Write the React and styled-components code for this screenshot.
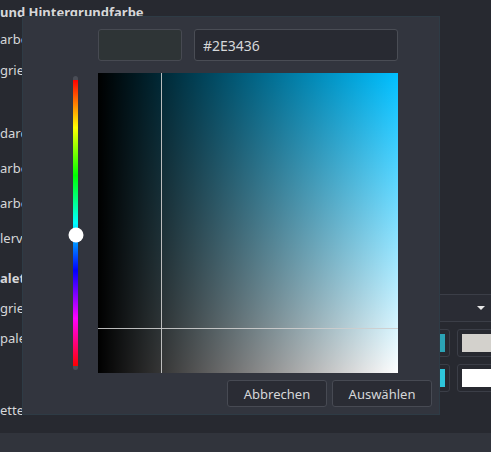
import React from "react";
import styled, { createGlobalStyle } from "styled-components";

const GlobalStyle = createGlobalStyle`
  html, body { margin: 0; padding: 0; background: #272930; }
  body { font-family: "Noto Sans", "Open Sans", sans-serif; }
  * { box-sizing: border-box; }
`;

const Page = styled.div`
  width: 100%;
  height: 100vh;
  display: flex;
  flex-direction: column;
  overflow: hidden;
`;

const Main = styled.div`
  flex: 1;
  position: relative;
  overflow: hidden;
  background: #272930;
`;

const BottomBar = styled.div`
  height: 19px;
  flex-shrink: 0;
  background: #31343c;
`;

const Form = styled.div`
  display: flex;
  flex-direction: column;
  width: 520px;
`;

const Row = styled.div`
  display: flex;
  align-items: ${(p) => (p.$top ? "flex-start" : "center")};
  height: ${(p) => (p.$h ? `${p.$h}px` : "auto")};
  margin-top: ${(p) => p.$mt || 0}px;
`;

const Label = styled.div`
  width: 205px;
  flex-shrink: 0;
  font-size: 13px;
  line-height: 18px;
  color: #d6d7d9;
  font-weight: ${(p) => (p.$bold ? 700 : 400)};
  white-space: nowrap;
`;

const Control = styled.div`
  flex: 1;
`;

const Dropdown = styled.div`
  width: 293px;
  height: 28px;
  border: 1px solid #3b3e47;
  border-radius: 3px;
  background: #2a2c34;
  display: flex;
  align-items: center;
  justify-content: flex-end;
  padding-right: 12px;
`;

const SwatchGrid = styled.div`
  display: grid;
  grid-template-columns: repeat(5, 56px);
  grid-auto-rows: 28px;
  gap: 7px;
`;

const SwatchCell = styled.div`
  border: 1px solid #3b3e47;
  border-radius: 3px;
  padding: 4px;
  background: #272930;
`;

const SwatchFill = styled.div`
  height: 100%;
  background: ${(p) => p.$c};
`;

const Dialog = styled.div`
  position: absolute;
  left: 22px;
  top: 16px;
  width: 418px;
  height: 399px;
  border: 1px solid #2e3b45;
  background: #32353e;
  padding: 12px 7px 7px 0;
  display: flex;
  flex-direction: column;
`;

const Body = styled.div`
  display: grid;
  grid-template-columns: 75px 300px;
  grid-template-rows: 32px 300px;
  row-gap: 12px;
`;

const TopRow = styled.div`
  grid-column: 2;
  grid-row: 1;
  display: flex;
  gap: 12px;
`;

const CurrentSwatch = styled.div`
  width: 84px;
  height: 32px;
  border: 1px solid #474a52;
  border-radius: 3px;
  background: ${(p) => p.$c};
`;

const HexInput = styled.input`
  width: 204px;
  height: 32px;
  background: #282a32;
  border: 1px solid #4a4d55;
  border-radius: 3px;
  color: #d6d7d9;
  font-family: "Noto Sans", sans-serif;
  font-size: 14px;
  padding: 0 8px;
  outline: none;
`;

const HueColumn = styled.div`
  grid-column: 1;
  grid-row: 2;
  padding: 3px 0 3px 50px;
  display: flex;
`;

const HueTrack = styled.div`
  position: relative;
  width: 5px;
  height: 100%;
  background: #4a4d56;
  border-radius: 3px;
  padding: 4px 0;
  display: flex;
`;

const HueGradient = styled.div`
  flex: 1;
  background: linear-gradient(
    to bottom,
    #ff0000 0%,
    #ffff00 16.67%,
    #00ff00 33.33%,
    #00ffff 50%,
    #0000ff 66.67%,
    #ff00ff 83.33%,
    #ff0000 100%
  );
`;

const HueKnob = styled.div`
  position: absolute;
  left: 50%;
  width: 15px;
  height: 15px;
  border-radius: 50%;
  background: #ffffff;
  transform: translate(-50%, -50%);
`;

const ColorArea = styled.div`
  grid-column: 2;
  grid-row: 2;
  position: relative;
  overflow: hidden;
  background: linear-gradient(to right, #000000, rgba(0, 0, 0, 0)),
    linear-gradient(to bottom, ${(p) => p.$hue}, #ffffff);
`;

const VLine = styled.div`
  position: absolute;
  top: 0;
  bottom: 0;
  width: 1px;
  background: rgba(205, 205, 205, 0.9);
`;

const HLine = styled.div`
  position: absolute;
  left: 0;
  right: 0;
  height: 1px;
  background: rgba(205, 205, 205, 0.9);
`;

const Footer = styled.div`
  display: flex;
  justify-content: flex-end;
  gap: 5px;
  margin-top: 7px;
`;

const Button = styled.button`
  width: 100px;
  height: 27px;
  background: #2a2c34;
  border: 1px solid #474a53;
  border-radius: 3px;
  color: #d6d7d9;
  font-family: "Noto Sans", sans-serif;
  font-size: 13px;
  padding: 0;
`;

const swatches = [
  ["#3b4252", "#5e81ac", "#88c0d0", "#2ba3b5", "#d3d1cc"],
  ["#4c566a", "#81a1c1", "#8fbcbb", "#2ec6dc", "#ffffff"],
];

export default function App() {
  const hue = 195;
  const sat = 0.15;
  const val = 0.21;
  const trackLen = 294;
  const knobTop = 4 + (hue / 360) * (trackLen - 8);
  return (
    <>
      <GlobalStyle />
      <Page>
        <Main>
          <Form>
            <Row $h={18} $mt={3}>
              <Label $bold>und Hintergrundfarbe</Label>
            </Row>
            <Row $h={36}>
              <Label>arbe</Label>
            </Row>
            <Row $h={26}>
              <Label>grie</Label>
            </Row>
            <Row $h={34} $mt={33}>
              <Label>darc</Label>
            </Row>
            <Row $h={36}>
              <Label>arbe</Label>
            </Row>
            <Row $h={34}>
              <Label>arbe</Label>
            </Row>
            <Row $h={36}>
              <Label>lerv</Label>
            </Row>
            <Row $h={32} $mt={6}>
              <Label $bold>alet</Label>
            </Row>
            <Row $h={28}>
              <Label>grie</Label>
              <Control>
                <Dropdown>
                  <svg width="8" height="4" viewBox="0 0 8 4">
                    <polygon points="0,0 8,0 4,4" fill="#e8e8e8" />
                  </svg>
                </Dropdown>
              </Control>
            </Row>
            <Row $top $mt={7}>
              <Label>pale</Label>
              <Control>
                <SwatchGrid>
                  {swatches.flat().map((c, i) => (
                    <SwatchCell key={i}>
                      <SwatchFill $c={c} />
                    </SwatchCell>
                  ))}
                </SwatchGrid>
              </Control>
            </Row>
            <Row $h={18} $mt={9}>
              <Label>ette</Label>
            </Row>
          </Form>

          <Dialog>
            <Body>
              <TopRow>
                <CurrentSwatch $c="#2E3436" />
                <HexInput defaultValue="#2E3436" readOnly />
              </TopRow>
              <HueColumn>
                <HueTrack>
                  <HueGradient />
                  <HueKnob style={{ top: `${knobTop}px` }} />
                </HueTrack>
              </HueColumn>
              <ColorArea $hue={`hsl(${hue}, 100%, 50%)`}>
                <VLine style={{ left: `${Math.round(val * 300)}px` }} />
                <HLine style={{ top: `${Math.round((1 - sat) * 300)}px` }} />
              </ColorArea>
            </Body>
            <Footer>
              <Button>Abbrechen</Button>
              <Button>Auswählen</Button>
            </Footer>
          </Dialog>
        </Main>
        <BottomBar />
      </Page>
    </>
  );
}
